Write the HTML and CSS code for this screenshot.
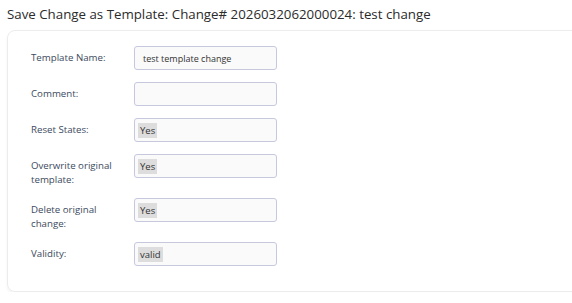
FILE: index.html
```html
<!DOCTYPE html>
<html>
<head>
<meta charset="utf-8">
<link rel="stylesheet" href="styles.css">
</head>
<body>
<h1 class="title">Save Change as Template: Change# 2026032062000024: test change</h1>
<div class="card">
  <div class="row">
    <label class="label">Template Name:</label>
    <div class="field"><span class="text">test template change</span></div>
  </div>
  <div class="row">
    <label class="label">Comment:</label>
    <div class="field"></div>
  </div>
  <div class="row">
    <label class="label">Reset States:</label>
    <div class="field"><span class="tag">Yes</span></div>
  </div>
  <div class="row">
    <label class="label">Overwrite original template:</label>
    <div class="field"><span class="tag">Yes</span></div>
  </div>
  <div class="row">
    <label class="label">Delete original change:</label>
    <div class="field"><span class="tag">Yes</span></div>
  </div>
  <div class="row">
    <label class="label">Validity:</label>
    <div class="field"><span class="tag">valid</span></div>
  </div>
</div>
</body>
</html>
```
FILE: styles.css
```css
html, body { margin: 0; padding: 0; background: #fff; }
body {
  font-family: "Open Sans", "Noto Sans", sans-serif;
  color: #333;
  padding: 0 0 0 7px;
  overflow: hidden;
}
.title {
  font-size: 13.3px;
  font-weight: 400;
  margin: 0;
  height: 30px;
  line-height: 28px;
  color: #2b2b2b;
}
.card {
  width: 600px;
  border: 1px solid #ececec;
  border-radius: 8px;
  box-shadow: 0 2px 3px rgba(0,0,0,0.05);
  padding: 15px 0 25px 23px;
  box-sizing: border-box;
}
.row {
  display: flex;
  align-items: flex-start;
  margin-bottom: 12px;
}
.row:last-child { margin-bottom: 0; }
.label {
  width: 103px;
  box-sizing: border-box;
  padding: 5px 14px 0 0;
  font-size: 9.7px;
  line-height: 13.5px;
  color: #3c4a5e;
}
.field {
  width: 143px;
  height: 24px;
  box-sizing: border-box;
  border: 1px solid #c6c9dd;
  border-radius: 3px;
  background: #fafafa;
  display: flex;
  align-items: center;
  padding: 0 3px;
  font-size: 9px;
  color: #333;
}
.text { padding-left: 5px; }
.tag {
  background: #dddddd;
  padding: 0 2px;
  line-height: 15px;
  font-size: 9.5px;
}
```
